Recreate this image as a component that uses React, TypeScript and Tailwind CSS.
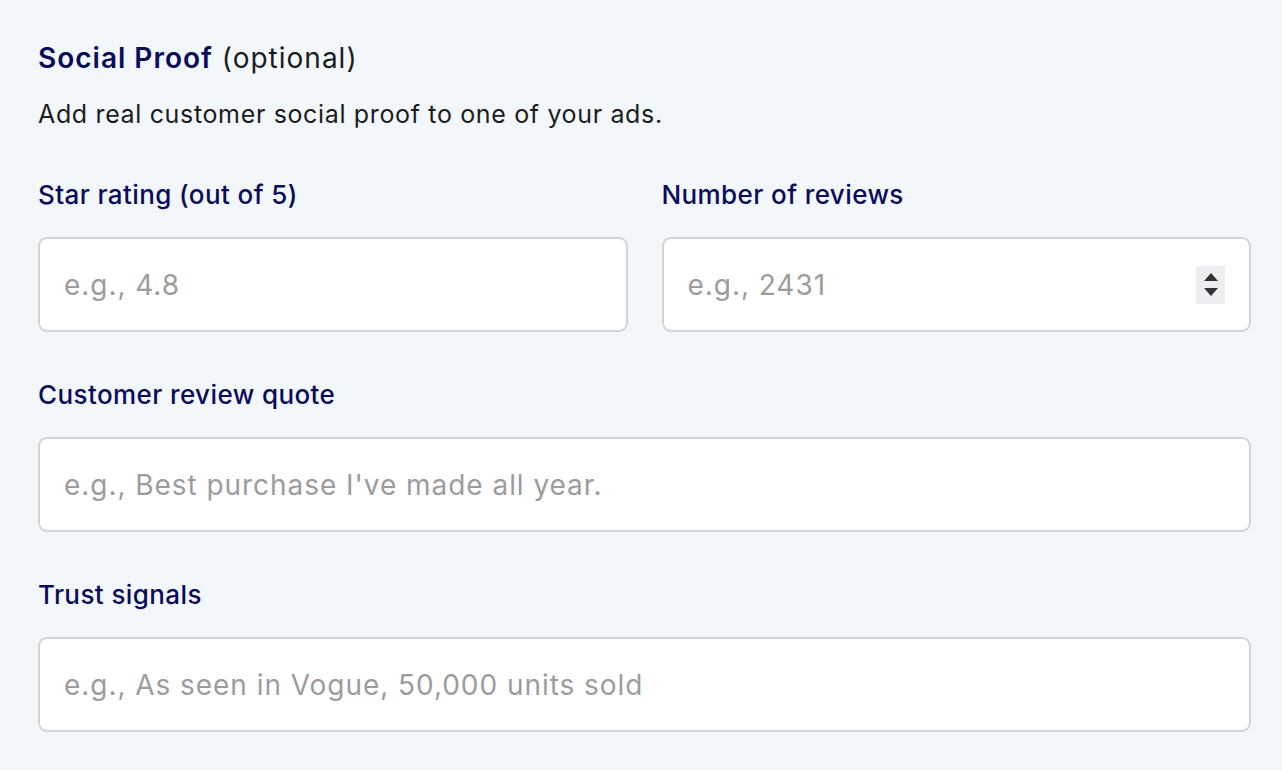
import type { ReactNode } from 'react'

function Field({ label, children }: { label: string; children: ReactNode }) {
  return (
    <div className="flex flex-col">
      <label className="text-[26px] leading-[36px] font-medium tracking-[0.4px] text-[#0b0b5c] mb-[24px]">{label}</label>
      {children}
    </div>
  )
}

function TextBox({ placeholder, spinner }: { placeholder: string; spinner?: boolean }) {
  return (
    <div className="h-[95px] rounded-[9px] border-2 border-[#d4d4d6] bg-white flex items-center pl-[24px] pr-[24px]">
      <input
        type="text"
        placeholder={placeholder}
        className="flex-1 min-w-0 bg-transparent outline-none text-[28px] tracking-[0.95px] text-[#222] placeholder-[#9c9c9c]"
      />
      {/* 数字输入框的上下箭头 */}
      {spinner && (
        <div className="w-[29px] h-[38px] bg-[#eceef1] flex flex-col items-center justify-center gap-[7px]">
          <svg width="14" height="8" viewBox="0 0 14 8"><path d="M7 0 L14 8 L0 8 Z" fill="#333" /></svg>
          <svg width="14" height="8" viewBox="0 0 14 8"><path d="M0 0 L14 0 L7 8 Z" fill="#333" /></svg>
        </div>
      )}
    </div>
  )
}

export default function App() {
  return (
    <div className="min-h-screen bg-[#f2f7fc] px-[38px] pt-[38px] pb-[38px]" style={{ fontFamily: 'Inter, "Noto Sans", sans-serif' }}>
      <div className="w-[1213px]">
        <h2 className="text-[28px] leading-[40px] tracking-[1px] text-[#1c1c1c]">
          <span className="font-semibold text-[#0b0b5c]">Social Proof</span> (optional)
        </h2>
        <p className="text-[25px] leading-[36px] tracking-[0.65px] text-[#1c1c1c] mt-[18px]">
          Add real customer social proof to one of your ads.
        </p>

        <div className="mt-[45px] flex flex-col gap-[45px]">
          <div className="grid grid-cols-2 gap-[34px]">
            <Field label="Star rating (out of 5)">
              <TextBox placeholder="e.g., 4.8" />
            </Field>
            <Field label="Number of reviews">
              <TextBox placeholder="e.g., 2431" spinner />
            </Field>
          </div>
          <Field label="Customer review quote">
            <TextBox placeholder="e.g., Best purchase I've made all year." />
          </Field>
          <Field label="Trust signals">
            <TextBox placeholder="e.g., As seen in Vogue, 50,000 units sold" />
          </Field>
        </div>
      </div>
    </div>
  )
}
